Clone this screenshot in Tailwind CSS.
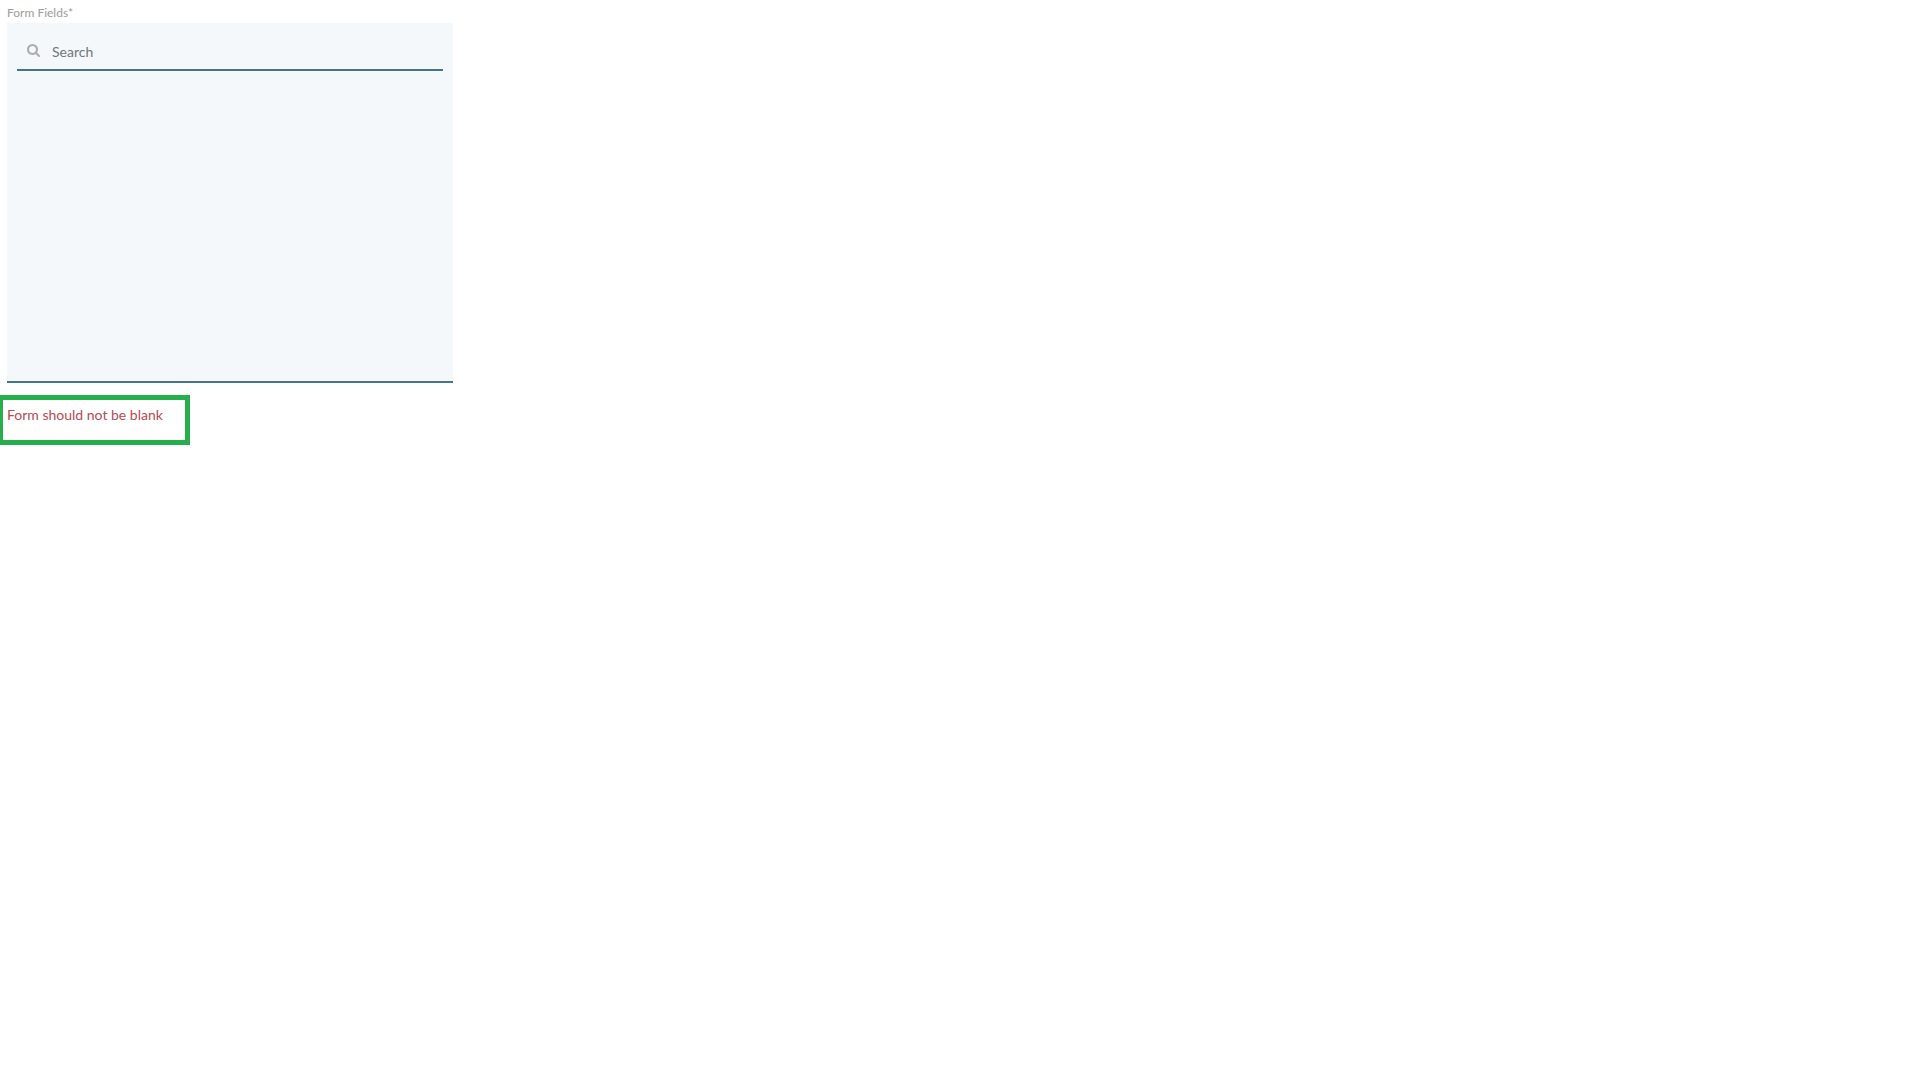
<!DOCTYPE html>
<html lang="en">
  <head>
    <meta charset="UTF-8" />
    <meta name="viewport" content="width=device-width, initial-scale=1.0" />
    <title>Form Fields</title>
    <script src="https://cdn.jsdelivr.net/npm/@tailwindcss/browser@4"></script>
  </head>
  <body class="min-h-screen bg-white font-['Lato',sans-serif]">
    <form class="pt-1">
      <label for="field-search" class="block pb-0.5 pl-[7px] text-xs leading-[17px] text-[#9b9b9b]"
        >Form Fields*</label
      >

      <div class="ml-[7px] h-[360px] w-full max-w-[446px] border-b-2 border-[#457389] bg-[#f4f8fb] px-2.5 pt-2.5">
        <div class="flex h-[38px] items-center gap-3 border-b-2 border-[#457389] pb-0.5 pl-2.5">
          <svg class="size-[13px] shrink-0 fill-[#acacac]" viewBox="0 0 1664 1664" aria-hidden="true">
            <path
              d="M1152 704q0-185-131.500-316.500T704 256 387.500 387.500 256 704t131.500 316.500T704 1152t316.500-131.500T1152 704zm512 832q0 52-38 90t-90 38q-54 0-90-38l-343-342q-179 124-399 124-143 0-273.500-55.500t-225-150-150-225T0 704t55.500-273.500 150-225 225-150T704 0t273.500 55.500 225 150 150 225T1408 704q0 220-124 399l343 343q37 37 37 90z"
            />
          </svg>
          <input
            id="field-search"
            type="text"
            placeholder="Search"
            class="h-full w-full bg-transparent pt-0.5 text-sm text-[#55606a] outline-none placeholder:text-[#6f777d]"
          />
        </div>
      </div>

      <!-- Validation message -->
      <div class="mt-3 flex h-[50px] w-[190px] border-5 border-l-3 border-[#27ae4d] pt-[5px] pl-1">
        <p class="text-sm whitespace-nowrap text-[#b64a55]" role="alert">Form should not be blank</p>
      </div>
    </form>
  </body>
</html>
